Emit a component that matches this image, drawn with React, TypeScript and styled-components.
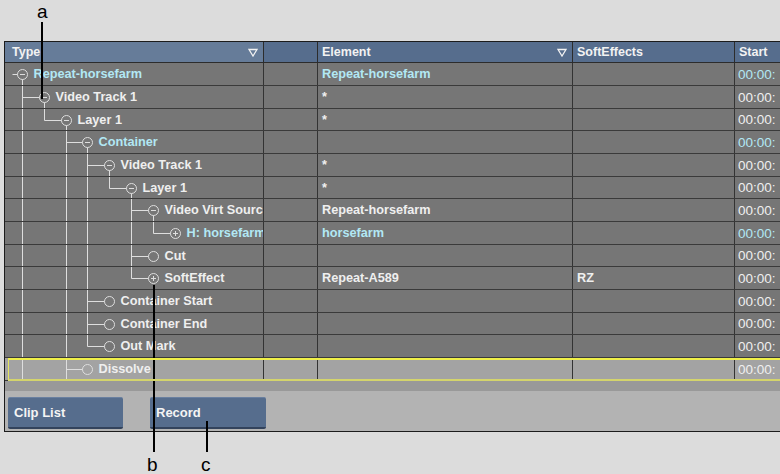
import React from "react";
import styled, { createGlobalStyle } from "styled-components";

const GlobalStyle = createGlobalStyle`
  html, body { margin: 0; padding: 0; background: #dcdcdc; }
  body { font-family: "Liberation Sans", Arial, sans-serif; }
`;

const Page = styled.div`
  position: relative;
  width: 780px;
  height: 474px;
  overflow: hidden;
  box-sizing: border-box;
  padding: 41px 0 0 4px;
  background: #dcdcdc;
`;

const Panel = styled.div`
  width: 820px;
  height: 391px;
  box-sizing: border-box;
  border: 1px solid #1c1c1c;
  border-right: none;
  background: #b3b3b3;
  display: flex;
  flex-direction: column;
  overflow: hidden;
`;

const COLS = "259px 54px 255px 162px 1fr";

const HeaderRow = styled.div`
  display: grid;
  grid-template-columns: ${COLS};
  height: 21px;
  box-sizing: border-box;
  border-bottom: 1px solid #2c2c2c;
`;

const HeadCell = styled.div<{ $light?: boolean; $pad?: number }>`
  display: flex;
  align-items: center;
  justify-content: space-between;
  box-sizing: border-box;
  padding: 0 5px 0 ${(p) => p.$pad ?? 4}px;
  border-right: 1px solid #2c2c2c;
  background: ${(p) => (p.$light ? "#667c99" : "#566d8d")};
  color: #f2f2f2;
  font-size: 12.5px;
  font-weight: bold;
  white-space: nowrap;
  overflow: hidden;
`;

const Row = styled.div<{ $selected?: boolean }>`
  position: relative;
  flex: none;
  display: grid;
  grid-template-columns: ${COLS};
  height: 23px;
  box-sizing: border-box;
  border-bottom: 1px solid #3a3a3a;
  background: ${(p) => (p.$selected ? "#a3a3a3" : "#767676")};
  &:nth-child(3n + 1) {
    height: 22px;
  }
  &::after {
    content: "";
    display: ${(p) => (p.$selected ? "block" : "none")};
    position: absolute;
    left: 3px;
    right: 0;
    top: 0;
    bottom: -1px;
    box-sizing: border-box;
    border-top: 2px solid #f0f048;
    border-left: 1px solid #e4e460;
    border-bottom: 2px solid #d4d46c;
    pointer-events: none;
    z-index: 2;
  }
`;

const Cell = styled.div<{ $cyan?: boolean }>`
  display: flex;
  align-items: center;
  box-sizing: border-box;
  padding-left: 4px;
  border-right: 1px solid #333;
  color: ${(p) => (p.$cyan ? "#b2e8f4" : "#efefef")};
  font-size: 12.7px;
  font-weight: bold;
  white-space: nowrap;
  overflow: hidden;
`;

const TimeCell = styled(Cell)`
  font-size: 13.5px;
  font-weight: normal;
  padding-left: 3px;
`;

const TreeCell = styled.div<{ $cyan?: boolean }>`
  display: flex;
  align-items: stretch;
  box-sizing: border-box;
  border-right: 1px solid #333;
  color: ${(p) => (p.$cyan ? "#b2e8f4" : "#efefef")};
  font-size: 12.7px;
  font-weight: bold;
  white-space: nowrap;
  overflow: hidden;
`;

const TreeSvg = styled.svg`
  flex: none;
  height: 100%;
  display: block;
`;

const TreeLabel = styled.span`
  display: flex;
  align-items: center;
  margin-left: 4px;
`;

const Strip = styled.div`
  flex: none;
  height: 10px;
  background: #999;
`;

const ButtonBar = styled.div`
  display: flex;
  gap: 27px;
  padding: 6px 3px 0;
  flex: 1;
`;

const Button = styled.div<{ $w: number }>`
  width: ${(p) => p.$w}px;
  height: 32px;
  box-sizing: border-box;
  background: #566d8d;
  border-top: 1px solid #6a80a0;
  border-bottom: 2px solid #33435c;
  border-radius: 2px;
  color: #f4f4f4;
  font-size: 13px;
  font-weight: bold;
  display: flex;
  align-items: center;
  padding-left: 6px;
`;

const Leader = styled.div<{ $x: number; $top: number; $h: number }>`
  position: absolute;
  left: ${(p) => p.$x}px;
  top: ${(p) => p.$top}px;
  width: 2px;
  height: ${(p) => p.$h}px;
  background: #000;
`;

const Callout = styled.div<{ $x: number; $top: number }>`
  position: absolute;
  left: ${(p) => p.$x}px;
  top: ${(p) => p.$top}px;
  font-family: "Liberation Sans", Arial, sans-serif;
  font-size: 19px;
  line-height: 19px;
  color: #000;
`;

type Icon = "minus" | "plus" | "none";
interface RowData {
  label: string;
  level: number;
  icon: Icon;
  last: boolean;
  cont: boolean[];
  cyan?: boolean;
  element?: string;
  elementCyan?: boolean;
  soft?: string;
  selected?: boolean;
}

const t = true;
const f = false;

const rows: RowData[] = [
  { label: "Repeat-horsefarm", level: 0, icon: "minus", last: t, cont: [], cyan: t, element: "Repeat-horsefarm", elementCyan: t },
  { label: "Video Track 1", level: 1, icon: "minus", last: f, cont: [], element: "*" },
  { label: "Layer 1", level: 2, icon: "minus", last: t, cont: [t], element: "*" },
  { label: "Container", level: 3, icon: "minus", last: f, cont: [t, f], cyan: t },
  { label: "Video Track 1", level: 4, icon: "minus", last: f, cont: [t, f, t], element: "*" },
  { label: "Layer 1", level: 5, icon: "minus", last: t, cont: [t, f, t, t], element: "*" },
  { label: "Video Virt Source", level: 6, icon: "minus", last: f, cont: [t, f, t, t, f], element: "Repeat-horsefarm" },
  { label: "H: horsefarm", level: 7, icon: "plus", last: t, cont: [t, f, t, t, f, t], cyan: t, element: "horsefarm", elementCyan: t },
  { label: "Cut", level: 6, icon: "none", last: f, cont: [t, f, t, t, f] },
  { label: "SoftEffect", level: 6, icon: "plus", last: t, cont: [t, f, t, t, f], element: "Repeat-A589", soft: "RZ" },
  { label: "Container Start", level: 4, icon: "none", last: f, cont: [t, f, t] },
  { label: "Container End", level: 4, icon: "none", last: f, cont: [t, f, t] },
  { label: "Out Mark", level: 4, icon: "none", last: t, cont: [t, f, t] },
  { label: "Dissolve", level: 3, icon: "none", last: f, cont: [t, f], selected: t },
];

const cx = (l: number) => 17 + Math.round(21.8 * l) + 0.5;
const STROKE = "#dedede";

function TreeLines({ r }: { r: RowData }) {
  const mid = 11.5;
  const R = 5;
  const H = 24;
  const c = cx(r.level);
  const w = c + 7;
  const parts: React.ReactNode[] = [];
  r.cont.forEach((on, k) => {
    if (on) parts.push(<line key={"c" + k} x1={cx(k)} y1={0} x2={cx(k)} y2={H} />);
  });
  if (r.level > 0) {
    const p = cx(r.level - 1);
    parts.push(<line key="v" x1={p} y1={0} x2={p} y2={r.last ? mid : H} />);
    parts.push(<line key="h" x1={p} y1={mid} x2={c - R} y2={mid} />);
  } else {
    parts.push(<line key="h" x1={c - 10} y1={mid} x2={c - R} y2={mid} />);
  }
  parts.push(<circle key="o" cx={c} cy={mid} r={R} fill="none" />);
  if (r.icon !== "none") {
    parts.push(<line key="m" x1={c - 2.5} y1={mid} x2={c + 2.5} y2={mid} />);
  }
  if (r.icon === "plus") {
    parts.push(<line key="p" x1={c} y1={mid - 2.5} x2={c} y2={mid + 2.5} />);
  }
  if (r.icon === "minus") {
    parts.push(<line key="d" x1={c} y1={mid + R} x2={c} y2={H} />);
  }
  return (
    <TreeSvg width={w} stroke={STROKE} strokeWidth={1}>
      {parts}
    </TreeSvg>
  );
}

function SortMark() {
  return (
    <svg width="10" height="9" viewBox="0 0 10 9">
      <path d="M1 1.5 H9 L5 8 Z" fill="none" stroke="#f2f2f2" strokeWidth="1.3" />
    </svg>
  );
}

export default function App() {
  return (
    <>
      <GlobalStyle />
      <Page>
        <Panel>
          <HeaderRow>
            <HeadCell $light $pad={7}>
              <span>Type</span>
              <SortMark />
            </HeadCell>
            <HeadCell />
            <HeadCell>
              <span>Element</span>
              <SortMark />
            </HeadCell>
            <HeadCell>
              <span>SoftEffects</span>
            </HeadCell>
            <HeadCell>
              <span>Start</span>
            </HeadCell>
          </HeaderRow>
          {rows.map((r, i) => (
            <Row key={i} $selected={r.selected}>
              <TreeCell $cyan={r.cyan}>
                <TreeLines r={r} />
                <TreeLabel>{r.label}</TreeLabel>
              </TreeCell>
              <Cell />
              <Cell $cyan={r.elementCyan}>{r.element}</Cell>
              <Cell>{r.soft}</Cell>
              <TimeCell $cyan={r.cyan}>00:00:</TimeCell>
            </Row>
          ))}
          <Strip />
          <ButtonBar>
            <Button $w={115}>Clip List</Button>
            <Button $w={116}>Record</Button>
          </ButtonBar>
        </Panel>
        <Leader $x={41} $top={22} $h={77} />
        <Leader $x={153} $top={285} $h={167} />
        <Leader $x={206} $top={421} $h={31} />
        <Callout $x={37} $top={2}>a</Callout>
        <Callout $x={147} $top={455}>b</Callout>
        <Callout $x={201} $top={455}>c</Callout>
      </Page>
    </>
  );
}
